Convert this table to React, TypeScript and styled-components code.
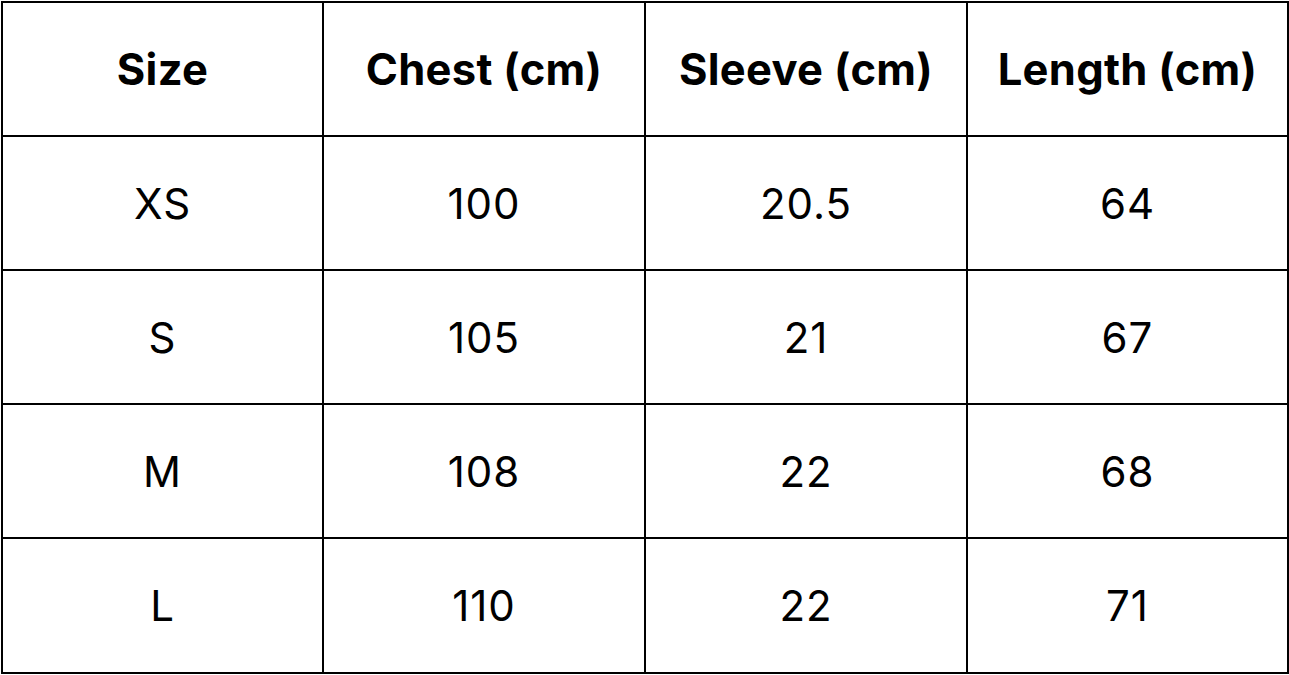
import styled, { createGlobalStyle } from "styled-components";

const GlobalStyle = createGlobalStyle`
    html, body {
        margin: 0;
        padding: 0;
        background: #ffffff;
    }
    body {
        font-family: Inter, "Open Sans", "Liberation Sans", sans-serif;
        color: #000000;
    }
`;

const Page = styled.div`
    padding: 1px 0 0 1px;
    width: 1289px;
    height: 675px;
    box-sizing: border-box;
`;

const Table = styled.div`
    display: grid;
    grid-template-columns: 319px 320px 320px 319px;
    grid-template-rows: 132px 132px 132px 132px 133px;
    gap: 2px;
    padding: 2px;
    background: #000000;
    width: 1288px;
    height: 673px;
    box-sizing: border-box;
`;

interface CellProps {
    $head?: boolean;
}

const Cell = styled.div<CellProps>`
    background: #ffffff;
    display: flex;
    align-items: center;
    justify-content: center;
    font-size: ${(p) => (p.$head ? "43.5px" : "42px")};
    font-weight: ${(p) => (p.$head ? 700 : 400)};
    letter-spacing: ${(p) => (p.$head ? "0.3px" : "1px")};
`;

const headers = ["Size", "Chest (cm)", "Sleeve (cm)", "Length (cm)"];

const rows = [
    ["XS", "100", "20.5", "64"],
    ["S", "105", "21", "67"],
    ["M", "108", "22", "68"],
    ["L", "110", "22", "71"],
];

export default function App() {
    return (
        <>
            <GlobalStyle />
            <Page>
                <Table>
                    {headers.map((h) => (
                        <Cell key={h} $head>
                            {h}
                        </Cell>
                    ))}
                    {rows.map((r) =>
                        r.map((v, i) => <Cell key={r[0] + i}>{v}</Cell>)
                    )}
                </Table>
            </Page>
        </>
    );
}
